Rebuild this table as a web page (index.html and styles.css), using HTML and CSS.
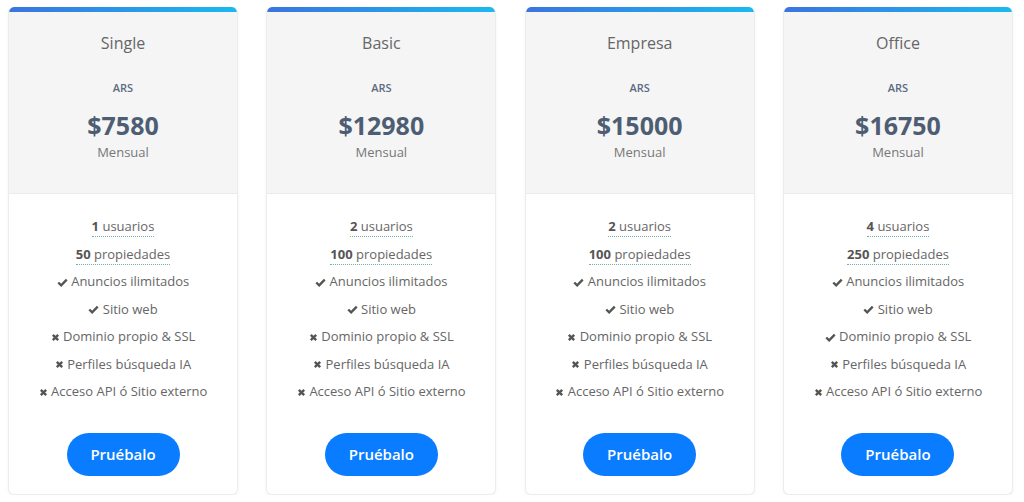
FILE: index.html
```html
<!DOCTYPE html>
<html lang="es">
<head>
    <meta charset="UTF-8">
    <meta name="viewport" content="width=device-width, initial-scale=1.0">
    <title>Planes</title>
    <link rel="stylesheet" href="styles.css">
</head>
<body>
    <div class="plans">

        <!-- Single -->
        <div class="plan">
            <div class="plan-head">
                <h3 class="plan-name">Single</h3>
                <div class="currency">ARS</div>
                <div class="price">$7580</div>
                <div class="period">Mensual</div>
            </div>
            <ul class="features">
                <li><span class="qty"><b>1</b> usuarios</span></li>
                <li><span class="qty"><b>50</b> propiedades</span></li>
                <li><svg class="ico" width="11" height="9" viewBox="0 0 12 10"><polyline points="1.3,5 4.5,8.2 10.7,1.8"/></svg> Anuncios ilimitados</li>
                <li><svg class="ico" width="11" height="9" viewBox="0 0 12 10"><polyline points="1.3,5 4.5,8.2 10.7,1.8"/></svg> Sitio web</li>
                <li><svg class="ico" width="9" height="9" viewBox="0 0 10 10"><path d="M2 2L8 8M8 2L2 8"/></svg> Dominio propio &amp; SSL</li>
                <li><svg class="ico" width="9" height="9" viewBox="0 0 10 10"><path d="M2 2L8 8M8 2L2 8"/></svg> Perfiles búsqueda IA</li>
                <li><svg class="ico" width="9" height="9" viewBox="0 0 10 10"><path d="M2 2L8 8M8 2L2 8"/></svg> Acceso API ó Sitio externo</li>
            </ul>
            <button class="try">Pruébalo</button>
        </div>

        <!-- Basic -->
        <div class="plan">
            <div class="plan-head">
                <h3 class="plan-name">Basic</h3>
                <div class="currency">ARS</div>
                <div class="price">$12980</div>
                <div class="period">Mensual</div>
            </div>
            <ul class="features">
                <li><span class="qty"><b>2</b> usuarios</span></li>
                <li><span class="qty"><b>100</b> propiedades</span></li>
                <li><svg class="ico" width="11" height="9" viewBox="0 0 12 10"><polyline points="1.3,5 4.5,8.2 10.7,1.8"/></svg> Anuncios ilimitados</li>
                <li><svg class="ico" width="11" height="9" viewBox="0 0 12 10"><polyline points="1.3,5 4.5,8.2 10.7,1.8"/></svg> Sitio web</li>
                <li><svg class="ico" width="9" height="9" viewBox="0 0 10 10"><path d="M2 2L8 8M8 2L2 8"/></svg> Dominio propio &amp; SSL</li>
                <li><svg class="ico" width="9" height="9" viewBox="0 0 10 10"><path d="M2 2L8 8M8 2L2 8"/></svg> Perfiles búsqueda IA</li>
                <li><svg class="ico" width="9" height="9" viewBox="0 0 10 10"><path d="M2 2L8 8M8 2L2 8"/></svg> Acceso API ó Sitio externo</li>
            </ul>
            <button class="try">Pruébalo</button>
        </div>

        <!-- Empresa -->
        <div class="plan">
            <div class="plan-head">
                <h3 class="plan-name">Empresa</h3>
                <div class="currency">ARS</div>
                <div class="price">$15000</div>
                <div class="period">Mensual</div>
            </div>
            <ul class="features">
                <li><span class="qty"><b>2</b> usuarios</span></li>
                <li><span class="qty"><b>100</b> propiedades</span></li>
                <li><svg class="ico" width="11" height="9" viewBox="0 0 12 10"><polyline points="1.3,5 4.5,8.2 10.7,1.8"/></svg> Anuncios ilimitados</li>
                <li><svg class="ico" width="11" height="9" viewBox="0 0 12 10"><polyline points="1.3,5 4.5,8.2 10.7,1.8"/></svg> Sitio web</li>
                <li><svg class="ico" width="9" height="9" viewBox="0 0 10 10"><path d="M2 2L8 8M8 2L2 8"/></svg> Dominio propio &amp; SSL</li>
                <li><svg class="ico" width="9" height="9" viewBox="0 0 10 10"><path d="M2 2L8 8M8 2L2 8"/></svg> Perfiles búsqueda IA</li>
                <li><svg class="ico" width="9" height="9" viewBox="0 0 10 10"><path d="M2 2L8 8M8 2L2 8"/></svg> Acceso API ó Sitio externo</li>
            </ul>
            <button class="try">Pruébalo</button>
        </div>

        <!-- Office -->
        <div class="plan">
            <div class="plan-head">
                <h3 class="plan-name">Office</h3>
                <div class="currency">ARS</div>
                <div class="price">$16750</div>
                <div class="period">Mensual</div>
            </div>
            <ul class="features">
                <li><span class="qty"><b>4</b> usuarios</span></li>
                <li><span class="qty"><b>250</b> propiedades</span></li>
                <li><svg class="ico" width="11" height="9" viewBox="0 0 12 10"><polyline points="1.3,5 4.5,8.2 10.7,1.8"/></svg> Anuncios ilimitados</li>
                <li><svg class="ico" width="11" height="9" viewBox="0 0 12 10"><polyline points="1.3,5 4.5,8.2 10.7,1.8"/></svg> Sitio web</li>
                <li><svg class="ico" width="11" height="9" viewBox="0 0 12 10"><polyline points="1.3,5 4.5,8.2 10.7,1.8"/></svg> Dominio propio &amp; SSL</li>
                <li><svg class="ico" width="9" height="9" viewBox="0 0 10 10"><path d="M2 2L8 8M8 2L2 8"/></svg> Perfiles búsqueda IA</li>
                <li><svg class="ico" width="9" height="9" viewBox="0 0 10 10"><path d="M2 2L8 8M8 2L2 8"/></svg> Acceso API ó Sitio externo</li>
            </ul>
            <button class="try">Pruébalo</button>
        </div>

    </div>
</body>
</html>
```

FILE: styles.css
```css
body {
    margin: 0;
    padding: 7px 11px 0 8px;
    background-color: #ffffff;
    font-family: 'Open Sans', sans-serif;
    color: #666;
}

.plans {
    display: grid;
    grid-template-columns: repeat(4, 230px);
    justify-content: space-between;
}

.plan {
    display: flex;
    flex-direction: column;
    align-items: center;
    height: 488px;
    box-sizing: border-box;
    border: 1px solid #ececec;
    border-top: none;
    border-radius: 6px;
    box-shadow: 0 2px 4px rgba(0, 0, 0, 0.04);
    background-color: white;
    overflow: hidden;
}

/* barra de color arriba de cada plan */
.plan::before {
    content: '';
    align-self: stretch;
    height: 5px;
    margin: 0 -1px;
    background: linear-gradient(90deg, #3b74df, #1ab9f1);
}

.plan-head {
    align-self: stretch;
    height: 182px;
    padding-top: 19px;
    box-sizing: border-box;
    border-bottom: 1px solid #ebebeb;
    background-color: #f5f5f5;
    text-align: center;
}

.plan-name {
    margin: 0;
    font-size: 16px;
    font-weight: 400;
    color: #666;
    line-height: 24px;
}

.currency {
    margin-top: 25px;
    font-size: 11px;
    font-weight: 600;
    color: #5c6b80;
    line-height: 16px;
}

.price {
    margin-top: 15px;
    font-size: 25px;
    font-weight: 700;
    color: #4d5d73;
    line-height: 28px;
}

.period {
    margin-top: 3px;
    font-size: 13px;
    color: #777;
    line-height: 20px;
}

.features {
    list-style: none;
    margin: 0;
    padding: 22px 0 0;
    text-align: center;
    font-size: 13px;
    color: #666;
}

.features li {
    height: 27.5px;
    line-height: 20px;
}

.qty {
    border-bottom: 1px dotted #6fb3a8;
    padding-bottom: 1px;
}

.qty b {
    color: #555;
    font-weight: 700;
}

.ico {
    fill: none;
    stroke: #555;
    stroke-width: 2.6;
    vertical-align: -0.5px;
}

.try {
    margin-top: 24px;
    width: 113px;
    height: 43px;
    border: none;
    border-radius: 22px;
    background-color: #0a7cff;
    color: white;
    font-family: 'Open Sans', sans-serif;
    font-size: 15px;
    font-weight: 600;
    cursor: pointer;
}
```
